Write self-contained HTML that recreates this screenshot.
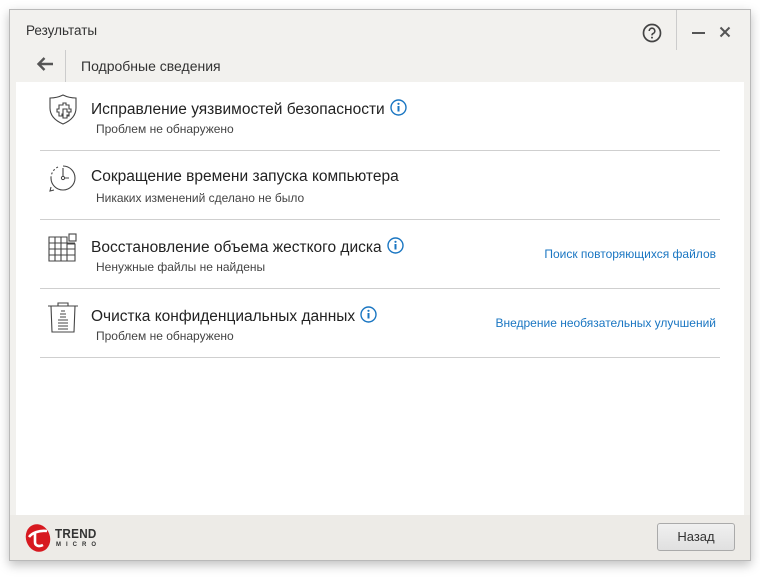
<!DOCTYPE html>
<html><head><meta charset="utf-8"><style>
*{margin:0;padding:0;box-sizing:border-box}
body{width:760px;height:578px;background:#fff;font-family:"Liberation Sans",sans-serif;position:relative;overflow:hidden}
.win{position:absolute;left:9px;top:9px;width:742px;height:552px;background:#f2f1ee;border:1px solid #b9b9b9;box-shadow:0 4px 10px rgba(0,0,0,.25)}
.abs{position:absolute}
.content{position:absolute;left:6px;top:72px;width:728px;height:433px;background:#fff}
.footer{position:absolute;left:0;top:505px;width:740px;height:45px;background:#edebe7}
.row{position:absolute;left:24px;width:680px;height:69px;border-bottom:1px solid #cfcfcf}
.t{position:absolute;left:51px;top:17px;font-size:15.5px;color:#222;white-space:nowrap}
.s{position:absolute;left:56px;top:40px;font-size:12px;color:#444;white-space:nowrap}
.link{position:absolute;right:4px;top:27px;font-size:12px;color:#1a76c2;white-space:nowrap}
.info{display:inline-block;vertical-align:-2px;margin-left:5px}
.ico{position:absolute;left:6px;top:12px}
</style></head><body>
<div class="win">
 <div class="abs" style="left:16px;top:13px;font-size:13.5px;color:#333">Результаты</div>
 <svg class="abs" style="left:631px;top:12px" width="22" height="22" viewBox="0 0 22 22"><circle cx="11" cy="11" r="8.5" fill="none" stroke="#444" stroke-width="1.7"/><path d="M8.2 9a2.8 2.8 0 1 1 3.8 2.6c-.8.4-1 .9-1 1.8" fill="none" stroke="#444" stroke-width="1.6"/><circle cx="11" cy="15.6" r="1" fill="#444"/></svg>
 <div class="abs" style="left:666px;top:0;width:1px;height:40px;background:#ccc"></div>
 <div class="abs" style="left:682px;top:22px;width:13px;height:2px;background:#555"></div>
 <svg class="abs" style="left:709px;top:16px" width="12" height="12"><path d="M1.5 1.5L10.5 10.5M10.5 1.5L1.5 10.5" stroke="#555" stroke-width="2"/></svg>
 <svg class="abs" style="left:26px;top:46px" width="18" height="16" viewBox="0 0 18 16"><path d="M17 8H3M8.5 2L2.5 8l6 6" fill="none" stroke="#555" stroke-width="2.4"/></svg>
 <div class="abs" style="left:55px;top:40px;width:1px;height:32px;background:#ccc"></div>
 <div class="abs" style="left:71px;top:48px;font-size:14px;color:#333">Подробные сведения</div>
 <div class="content">
  <div class="row" style="top:0">
   <svg class="ico" style="top:11px" width="34" height="34" viewBox="0 0 34 34"><path d="M17 2C13 4 8 5 4 5v10c0 8 6 13 13 16c7-3 13-8 13-16V5c-4 0-9-1-13-3z" fill="none" stroke="#444" stroke-width="1.1"/><path d="M13 12h4v-2h3v2h3v4h2v3h-2v4h-4v-2h-3v2h-3v-4h-2v-3h2z" fill="none" stroke="#444" stroke-width="1.1"/><path d="M17 16h4v3h2v3h-2v3h-4z" fill="#fff" stroke="#444" stroke-width="1.1"/></svg>
   <div class="t">Исправление уязвимостей безопасности<svg class="info" width="17" height="17" viewBox="0 0 17 17"><circle cx="8.5" cy="8.5" r="7.5" fill="none" stroke="#1a76c2" stroke-width="1.4"/><rect x="7.5" y="7" width="2" height="5.5" fill="#1a76c2"/><circle cx="8.5" cy="4.8" r="1.1" fill="#1a76c2"/></svg></div>
   <div class="s">Проблем не обнаружено</div>
  </div>
  <div class="row" style="top:69px">
   <svg class="ico" style="top:11px" width="34" height="34" viewBox="0 0 34 34"><path d="M17 4a12 12 0 1 1-12 12" fill="none" stroke="#444" stroke-width="1.1"/><path d="M12 5a12 12 0 0 0-7 11" fill="none" stroke="#444" stroke-width="1.1" stroke-dasharray="2 2"/><path d="M5 25l-1 4 4-1" fill="none" stroke="#444" stroke-width="1.1"/><path d="M17 6v8" stroke="#444" stroke-width="1.1"/><circle cx="17" cy="16" r="1.6" fill="none" stroke="#444"/><path d="M19 16h4" stroke="#444"/></svg>
   <div class="t">Сокращение времени запуска компьютера</div>
   <div class="s">Никаких изменений сделано не было</div>
  </div>
  <div class="row" style="top:138px">
   <svg class="ico" style="top:12px" width="34" height="34" viewBox="0 0 34 34"><path d="M3 5h18v7h8v17H3z M3 11h26 M3 17h26 M3 23h26 M9 5v24 M15 5v24 M21 12v17" fill="none" stroke="#444" stroke-width="1.1"/><rect x="23" y="2" width="7" height="7" fill="none" stroke="#444" stroke-width="1.1"/></svg>
   <div class="t">Восстановление объема жесткого диска<svg class="info" width="17" height="17" viewBox="0 0 17 17"><circle cx="8.5" cy="8.5" r="7.5" fill="none" stroke="#1a76c2" stroke-width="1.4"/><rect x="7.5" y="7" width="2" height="5.5" fill="#1a76c2"/><circle cx="8.5" cy="4.8" r="1.1" fill="#1a76c2"/></svg></div>
   <div class="s">Ненужные файлы не найдены</div>
   <div class="link">Поиск повторяющихся файлов</div>
  </div>
  <div class="row" style="top:207px">
   <svg class="ico" style="top:12px" width="34" height="34" viewBox="0 0 34 34"><path d="M2 5h30M12 5V2h10v3M5 5l1 26h22l1-26" fill="none" stroke="#444" stroke-width="1.1"/><path d="M15 10h4M14 13h6M14 16h6M12 19h10M12 22h10M12 25h10M12 28h10" stroke="#444" stroke-width="1"/></svg>
   <div class="t">Очистка конфиденциальных данных<svg class="info" width="17" height="17" viewBox="0 0 17 17"><circle cx="8.5" cy="8.5" r="7.5" fill="none" stroke="#1a76c2" stroke-width="1.4"/><rect x="7.5" y="7" width="2" height="5.5" fill="#1a76c2"/><circle cx="8.5" cy="4.8" r="1.1" fill="#1a76c2"/></svg></div>
   <div class="s">Проблем не обнаружено</div>
   <div class="link">Внедрение необязательных улучшений</div>
  </div>
 </div>
 <div class="footer">
  <svg class="abs" style="left:14px;top:8px" width="28" height="30" viewBox="0 0 28 30"><ellipse cx="14" cy="15" rx="12" ry="14" fill="#d71920" transform="rotate(-20 14 15)"/><path d="M5 14c3-4 10-7 18-6M11 9v10c0 4 4 5 8 3" fill="none" stroke="#fff" stroke-width="2.6"/></svg>
  <div class="abs" style="left:45px;top:12px;font-size:13px;font-weight:bold;color:#333;letter-spacing:.3px;line-height:13px;transform:scaleX(.9);transform-origin:left">TREND</div>
  <div class="abs" style="left:46px;top:27px;font-size:6px;font-weight:bold;color:#333;letter-spacing:5px">MICRO</div>
  <div class="abs" style="left:647px;top:8px;width:78px;height:28px;border:1px solid #aaa;border-radius:3px;background:linear-gradient(#f0f0f0,#e0e0e0);font-size:13px;color:#333;text-align:center;line-height:26px">Назад</div>
 </div>
</div>
</body></html>
